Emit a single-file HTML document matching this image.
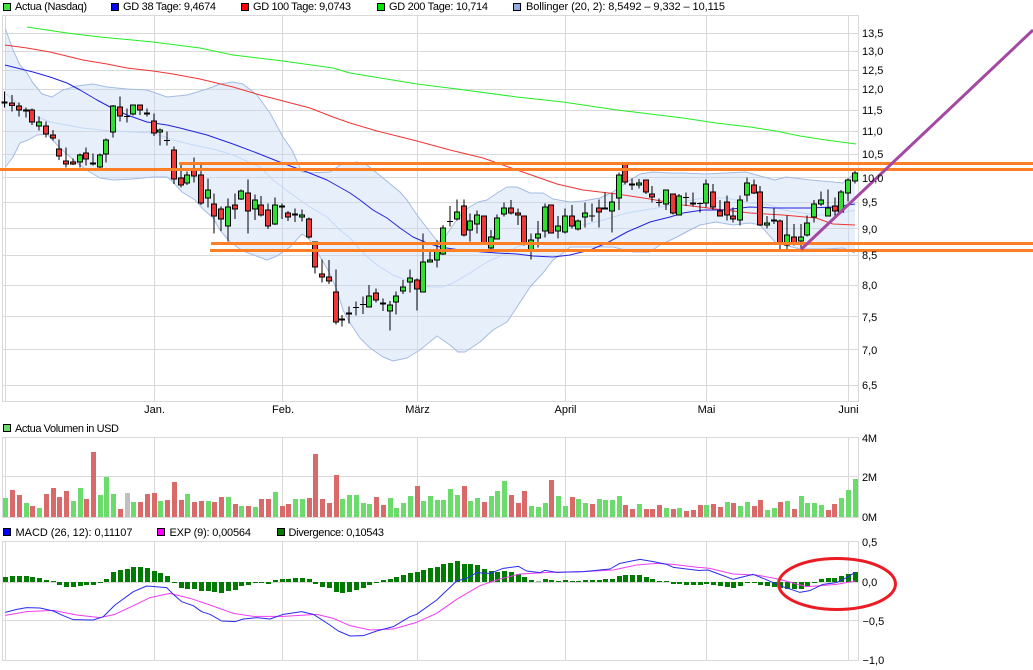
<!DOCTYPE html>
<html lang="de"><head><meta charset="utf-8"><title>Actua Chart</title>
<style>html,body{margin:0;padding:0;background:#fff}svg{display:block}text{font-family:"Liberation Sans",Arial,sans-serif;font-size:11px;fill:#000}</style>
</head><body>
<svg width="1033" height="670" viewBox="0 0 1033 670" xmlns="http://www.w3.org/2000/svg">
<!-- grid -->
<g fill="none" stroke="#d9d9d9" stroke-width="1" shape-rendering="crispEdges">
<path d="M2.5 15.5H858.5V401.5H2.5ZM5.5 15.5V401.5M154.5 15.5V401.5M282.5 15.5V401.5M417.5 15.5V401.5M565.5 15.5V401.5M706.5 15.5V401.5M848.5 15.5V401.5M3 33.5H858M3 51.5H858M3 70.5H858M3 89.5H858M3 110.5H858M3 131.5H858M3 154.5H858M3 177.5H858M3 202.5H858M3 228.5H858M3 255.5H858M3 285.5H858M3 316.5H858M3 349.5H858M3 385.5H858"/>
<path d="M2.5 437.5H858.5V517.5H2.5ZM5.5 437.5V517.5M154.5 437.5V517.5M282.5 437.5V517.5M417.5 437.5V517.5M565.5 437.5V517.5M706.5 437.5V517.5M848.5 437.5V517.5M3 476.5H858"/>
<path d="M2.5 541.5H858.5V660.5H2.5ZM5.5 541.5V660.5M154.5 541.5V660.5M282.5 541.5V660.5M417.5 541.5V660.5M565.5 541.5V660.5M706.5 541.5V660.5M848.5 541.5V660.5M3 582.5H858M3 620.5H858"/>
</g>
<!-- bollinger -->
<polygon fill="#c4d8f5" fill-opacity=".4" points="5.5,29 13,50 20,65 27,73 33,83 42,94 52,97 63,90 77,86 93,84 107,87 127,89 147,90 167,97 187,95 207,89 220,84 233,82 243,84 257,95 270,113 283,137 292,150 302,172 313,172.7 330,172 340,165 350,163 357,162 367,165 383,178 400,192 407,200 417,215 427,228 438,242 445,237 453,225 462,213 468,208 478,202 487,200 497,193 507,187 517,187 530,193 543,193 553,199 570,202 583,201 600,198 613,192 627,182 640,174 653,172 670,173 683,173 706,174 726,173 746,172 760,176 775,180 786,177 810,180 833,182 843,183 855,173 855,253 843,248 826,249 800,249 776,243 760,225 750,223 733,225 716,222 700,225 690,230 677,237 660,245 650,252 633,252 613,247 590,247 570,247 563,253 553,260 543,273 530,287 517,307 507,322 493,330 480,342 465,352 458,352 450,345 437,336 420,350 407,358 393,361 383,357 370,348 360,338 350,323 343,310 337,290 328,270 320,257 315,247 308,238 302,234 290,247 277,256 267,260 243,251 230,242 220,230 213,218 203,209 195,200 182,192 173,182 167,177 153,177 133,179 113,180 100,178 88,171 77,163 60,148 47,134 37,135 28,140 20,143 13,157 5.5,167"/>
<g fill="none" stroke-width="1" stroke-linejoin="round">
<polyline stroke="#c5d8f6" points="5,93 17,103 33,115 50,122 83,128 110,131 133,132 153,133 173,140 193,145 217,150 233,155 260,167 273,180 290,193 310,207 327,217 340,230 350,238 363,253 377,265 393,275 410,282 430,287 442,287 453,283 470,273 487,262 507,253 517,247 537,240 557,228 583,225 603,220 627,213 657,208 683,202 703,198 726,198 750,203 770,205 783,210 816,215 833,215 855,210"/>
<polyline stroke="#a5bbe3" points="5.5,29 13,50 20,65 27,73 33,83 42,94 52,97 63,90 77,86 93,84 107,87 127,89 147,90 167,97 187,95 207,89 220,84 233,82 243,84 257,95 270,113 283,137 292,150 302,172 313,172.7 330,172 340,165 350,163 357,162 367,165 383,178 400,192 407,200 417,215 427,228 438,242 445,237 453,225 462,213 468,208 478,202 487,200 497,193 507,187 517,187 530,193 543,193 553,199 570,202 583,201 600,198 613,192 627,182 640,174 653,172 670,173 683,173 706,174 726,173 746,172 760,176 775,180 786,177 810,180 833,182 843,183 855,173"/>
<polyline stroke="#a5bbe3" points="5.5,167 13,157 20,143 28,140 37,135 47,134 60,148 77,163 88,171 100,178 113,180 133,179 153,177 167,177 173,182 182,192 195,200 203,209 213,218 220,230 230,242 243,251 267,260 277,256 290,247 302,234 308,238 315,247 320,257 328,270 337,290 343,310 350,323 360,338 370,348 383,357 393,361 407,358 420,350 437,336 450,345 458,352 465,352 480,342 493,330 507,322 517,307 530,287 543,273 553,260 563,253 570,247 590,247 613,247 633,252 650,252 660,245 677,237 690,230 700,225 716,222 733,225 750,223 760,225 776,243 800,249 826,249 843,248 855,253"/>
<!-- moving averages -->
<polyline stroke="#22ee22" points="27,27 67,33 100,37 153,42 200,48 233,55 283,61 333,68 350,73 417,84 457,89 517,97 563,102 617,110 683,118 716,123 750,127 776,131 800,136 826,140 856,144"/>
<polyline stroke="#f03333" points="5,45 27,48 50,52 83,60 107,64 127,68 153,71 173,74 200,79 233,87 260,95 283,101 310,108 333,117 350,123 377,131 417,141 450,150 483,158 517,170 537,177 557,184 583,190 617,194 650,199 683,205 700,207 716,209 750,213 783,215 816,218 833,224 855,225"/>
<polyline stroke="#2222dd" points="5,65 17,68 33,72 50,77 67,83 80,90 97,100 110,107 127,115 147,122 167,125 180,128 207,135 233,144 257,153 277,161 293,167 307,172 327,180 350,193 360,200 373,210 387,218 400,228 413,237 427,243 440,247 460,250 483,252 497,253 517,254 533,256 553,257 570,255 590,250 607,243 627,232 650,222 670,217 683,213 703,210 723,210 750,207 773,208 810,208 833,207 855,204"/>
</g>
<!-- candles -->
<g fill="none" shape-rendering="crispEdges">
<g transform="scale(.33333)">
<path stroke="#000" stroke-width="3" d="M14 275V322M36 285V335M57 308V350M78 322V352M96 325V375M117 350V392M138 365V412M159 390V422M177 418V480M198 442V502M219 475V495M240 460V502M258 442V497M279 460V497M300 460V510M318 415V488M339 315V413M360 290V365M381 325V367M399 313V346M420 313V345M441 325V350M462 340V408M480 385V437M501 394V436M522 440V552M372 349H390M492 421H510"/>
<path stroke="#000" stroke-width="18" d="M14 304V311M36 307V318M57 316V331M78 328V335M96 328V367M117 364V379M138 376V403M159 403V415M177 445V469M198 481V493M219 484V493M240 463V487M258 457V478M279 487V493M300 463V503M318 418V463M339 316V397M360 319V349M399 313V343M420 313V331M441 337V343M462 361V400M480 388V397M522 448V538"/>
<path stroke="#30e030" stroke-width="12" d="M14 307V308M78 331V332M117 367V376M240 466V484M300 466V500M318 421V460M339 319V394M399 316V340M441 340V341M480 391V394"/>
<path stroke="#ee3838" stroke-width="12" d="M36 310V315M57 319V328M96 331V364M138 379V400M159 406V412M177 448V466M198 484V490M219 487V490M258 460V475M279 490V491M360 322V346M420 316V328M462 364V397M522 451V535"/>
</g>
<g transform="translate(0 150) scale(.33333)">
<path stroke="#000" stroke-width="3" d="M543 45V112M561 65V105M582 22V98M603 45V165M624 85V172M642 130V250M663 170V243M684 145V275M705 130V207M723 118V150M744 88V250M765 133V210M783 138V200M804 160V237M825 142V225M846 160V207M864 183V213M885 175V216M906 178V215M927 202V265M945 274V370M966 328V398M987 330V402M1008 358V523M1026 495V530M1047 470V520"/>
<path stroke="#000" stroke-width="18" d="M543 83V107M561 73V101M582 55V79M603 73V160M624 118V145M642 160V199M663 175V208M684 169V229M705 163V178M723 121V148M744 127V184M765 148V178M783 163V196M804 178V229M825 163V223M846 166V172M864 187V202M885 190V196M906 193V202M927 205V262M945 274V352M966 370V382M987 379V394M1008 424V517M1026 505V511M1047 487V493"/>
<path stroke="#30e030" stroke-width="12" d="M561 76V98M624 121V142M684 172V226M723 124V145M765 151V175M825 166V220M846 169V170M906 196V199"/>
<path stroke="#ee3838" stroke-width="12" d="M543 86V104M582 58V76M603 76V157M642 163V196M663 178V205M705 166V175M744 130V181M783 166V193M804 181V226M864 190V199M885 193V194M927 208V259M945 277V349M966 373V379M987 382V391M1008 427V514M1026 508V509M1047 490V491"/>
</g>
<g transform="translate(350 150) scale(.33333)">
<path stroke="#000" stroke-width="3" d="M18 455V497M39 440V492M57 405V472M78 415V457M99 445V483M120 453V542M138 425V494M159 390V432M180 358V428M201 385V482M219 250V427M240 305V337M261 270V353M279 225V315M300 168V230M321 148V212M342 148V260M360 190V275M381 181V250M402 196V281M423 240V300M441 193V268M462 157V200M483 150V193M504 175V225M522 196V287M543 250V328M564 213V293M585 160V262M603 163V250M624 198V266M645 175V250M666 165V235M684 208V242M705 157V232M726 160V215M747 148V233M765 127V178M786 130V248M807 68V180M825 40V103M846 85V120M867 87V115M888 88V132M906 108V158M927 145V170M948 118V180M969 130V193M987 132V197M1008 127V168M1029 127V170M9 473H27M30 464H48M291 215H309M717 198H735M918 158H936M999 143H1017"/>
<path stroke="#000" stroke-width="18" d="M57 436V472M78 427V451M99 457V463M120 463V484M138 436V457M159 409V424M180 382V397M201 388V418M219 334V427M240 328V337M261 302V331M279 232V313M321 184V208M342 166V257M360 211V241M381 193V223M402 196V281M423 259V295M441 202V268M462 172V193M483 172V190M504 187V196M522 196V280M543 268V300M564 250V265M585 169V244M603 163V250M624 226V244M645 196V247M666 196V229M684 211V238M705 187V202M747 172V187M765 172V178M786 154V184M807 73V145M825 40V97M846 100V106M867 97V106M888 88V127M906 130V142M948 118V163M969 130V190M987 136V196M1029 157V163"/>
<path stroke="#30e030" stroke-width="12" d="M57 439V469M120 466V481M138 439V454M159 412V421M180 385V394M219 337V424M240 331V334M261 305V328M279 235V310M321 187V205M360 214V238M381 196V220M423 262V292M441 205V265M462 175V190M543 271V297M564 253V262M585 172V241M624 229V241M645 199V244M684 214V235M705 190V199M765 175V176M786 157V181M807 76V142M846 103V104M867 100V103M948 121V160M987 139V193M1029 160V161"/>
<path stroke="#ee3838" stroke-width="12" d="M78 430V448M99 460V461M201 391V415M342 169V254M402 199V278M483 175V187M504 190V193M522 199V277M603 166V247M666 199V226M747 175V184M825 43V94M888 91V124M906 133V139M969 133V187"/>
</g>
<g transform="translate(683 150) scale(.33333)">
<path stroke="#000" stroke-width="3" d="M51 158V188M69 88V172M90 102V180M111 150V200M132 136V212M150 172V218M171 136V227M192 82V155M213 88V132M231 108V228M252 198V235M273 175V222M291 208V297M312 196V297M333 222V287M354 222V297M372 196V260M393 150V217M414 125V168M435 118V200M456 142V200M474 120V190M495 85V155M516 63V100M42 160H60"/>
<path stroke="#000" stroke-width="18" d="M69 100V160M90 124V172M111 181V199M132 154V196M150 196V208M171 148V211M192 97V136M213 103V130M231 124V226M252 217V226M273 208V214M291 211V285M312 253V286M333 259V280M354 259V275M372 217V256M393 160V202M414 148V163M435 172V199M456 166V184M474 124V187M495 88V130M516 67V94"/>
<path stroke="#30e030" stroke-width="12" d="M69 103V157M171 151V208M192 100V133M252 220V223M312 256V283M354 262V272M372 220V253M393 163V199M414 151V160M435 175V196M474 127V184M495 91V127M516 70V91"/>
<path stroke="#ee3838" stroke-width="12" d="M90 127V169M111 184V196M132 157V193M150 199V205M213 106V127M231 127V223M273 211V212M291 214V282M333 262V277M456 169V181"/>
</g>
</g>
<!-- volume -->
<g fill="none" stroke-width="15" shape-rendering="crispEdges">
<g transform="translate(0 400) scale(.33333)">
<path stroke="#6bdb6b" d="M16 351V294M79 351V309M118 351V324M220 351V303M241 351V264M301 351V285M319 351V231M340 351V282M400 351V306M481 351V303M562 351V282M625 351V303M685 351V291M724 351V318M766 351V321M826 351V276M886 351V297M907 351V297M1027 351V297M1048 351V285"/>
<path stroke="#da6a6a" d="M37 351V270M58 351V285M97 351V318M139 351V282M160 351V264M178 351V291M199 351V273M259 351V297M280 351V156M361 351V327M421 351V306M442 351V282M463 351V279M502 351V300M523 351V246M544 351V300M583 351V306M604 351V303M643 351V306M664 351V291M706 351V312M745 351V318M784 351V297M805 351V297M847 351V318M865 351V312M928 351V294M946 351V162M967 351V297M988 351V309M1009 351V225"/>
<path stroke="#c0c0c0" d="M382 351V279"/>
</g>
<g transform="translate(350 400) scale(.33333)">
<path stroke="#6bdb6b" d="M19 351V285M40 351V309M58 351V312M121 351V294M139 351V324M160 351V309M181 351V288M220 351V303M241 351V288M262 351V300M280 351V300M301 351V267M322 351V285M361 351V303M382 351V294M424 351V288M442 351V273M463 351V243M544 351V318M565 351V321M586 351V309M625 351V288M646 351V318M685 351V297M706 351V309M748 351V297M766 351V300M787 351V300M808 351V288M868 351V312M949 351V324M988 351V324"/>
<path stroke="#da6a6a" d="M79 351V291M100 351V315M202 351V258M343 351V258M403 351V306M484 351V285M505 351V309M523 351V273M604 351V240M667 351V291M727 351V312M826 351V315M847 351V327M889 351V327M907 351V327M928 351V315M970 351V327"/>
</g>
<g transform="translate(683 400) scale(.33333)">
<path stroke="#6bdb6b" d="M70 351V315M133 351V306M172 351V318M193 351V306M253 351V330M274 351V324M313 351V303M355 351V288M373 351V309M394 351V309M415 351V315M475 351V294M496 351V270M517 351V237"/>
<path stroke="#da6a6a" d="M10 351V333M31 351V330M52 351V315M91 351V312M112 351V321M151 351V309M214 351V318M232 351V300M292 351V306M334 351V327M436 351V330M454 351V312"/>
</g>
</g>
<!-- macd histogram -->
<g fill="none" stroke="#007a00" stroke-width="15" shape-rendering="crispEdges">
<path transform="translate(0 525) scale(.33333)" d="M16 171V156M37 171V153M58 171V153M79 171V153M97 171V156M118 171V159M139 171V165M160 171V168M178 171V180M199 171V186M220 171V186M241 171V183M259 171V180M280 171V180M301 171V174M319 171V162M340 171V141M361 171V135M382 171V132M400 171V126M421 171V126M442 171V129M463 171V138M481 171V144M502 171V153M523 171V174M544 171V189M562 171V192M583 171V192M604 171V198M625 171V198M643 171V201M664 171V204M685 171V198M706 171V195M724 171V183M745 171V180M766 171V174M784 171V174M805 171V177M826 171V165M847 171V162M865 171V162M886 171V159M907 171V159M928 171V162M946 171V177M967 171V186M988 171V189M1009 171V201M1027 171V204M1048 171V201"/>
<path transform="translate(350 525) scale(.33333)" d="M19 171V195M40 171V189M58 171V180M79 171V174M100 171V165M121 171V162M139 171V156M160 171V150M181 171V144M202 171V141M220 171V135M241 171V129M262 171V126M280 171V117M301 171V114M322 171V108M343 171V117M361 171V117M382 171V120M403 171V132M424 171V138M442 171V141M463 171V138M484 171V141M505 171V147M523 171V156M544 171V165M565 171V169M586 171V162M604 171V165M625 171V168M646 171V165M667 171V168M685 171V168M706 171V165M727 171V165M748 171V165M766 171V162M787 171V162M808 171V153M826 171V150M847 171V150M868 171V150M889 171V156M907 171V162M928 171V168M949 171V168M970 171V177M988 171V177"/>
<path transform="translate(683 525) scale(.33333)" d="M10 171V180M31 171V180M52 171V180M70 171V177M91 171V180M112 171V183M133 171V186M151 171V189M172 171V183M193 171V174M214 171V174M232 171V180M253 171V183M274 171V186M292 171V189M313 171V192M334 171V192M355 171V192M373 171V183M394 171V174M415 171V162M436 171V159M454 171V159M475 171V153M496 171V147M517 171V141"/>
</g>
<!-- macd lines -->
<g fill="none" stroke-width="3" stroke-linejoin="round">
<g stroke="#f23cf2">
<polyline transform="translate(0 525) scale(.33333)" points="16,271 80,260 160,256 230,270 300,278 345,268 400,242 450,218 510,205 570,220 630,240 700,265 760,274 850,274 950,268 1000,280 1050,302"/>
<polyline transform="translate(350 525) scale(.33333)" points="0,302 60,315 130,312 200,292 260,265 320,223 390,182 450,162 510,147 600,142 700,140 790,135 860,120 920,115 970,118 1050,128"/>
<polyline transform="translate(683 525) scale(.33333)" points="51,127 80,130 150,147 220,150 290,163 370,185 400,183 460,178 517,168"/>
</g>
<g stroke="#2a2aee">
<polyline transform="translate(0 525) scale(.33333)" points="16,262 50,253 80,248 120,249 160,258 190,272 220,284 280,285 310,275 345,240 400,200 440,183 500,188 520,208 545,230 580,242 605,260 630,268 665,288 705,290 730,282 770,278 810,282 850,268 905,260 940,268 985,297 1015,318 1050,333"/>
<polyline transform="translate(350 525) scale(.33333)" points="0,333 40,332 80,318 130,305 180,275 200,268 260,225 320,168 350,160 380,143 420,145 460,130 505,124 530,138 570,143 585,136 620,142 700,140 780,132 810,115 870,103 910,110 950,118 970,127 1010,132 1050,137"/>
<polyline transform="translate(683 525) scale(.33333)" points="51,136 75,135 150,163 210,148 240,160 300,185 350,202 380,197 420,178 460,173 490,158 517,142"/>
</g>
</g>
<!-- annotations -->
<g fill="none" stroke="#ff7f27" stroke-width="3" shape-rendering="crispEdges">
<path d="M179 163.5H1033M0 169.5H1033M211 243.5H1033M210 250.5H1033"/>
</g>
<line x1="801" y1="249.5" x2="1033" y2="30" stroke="#a349a4" stroke-width="3"/>
<ellipse cx="837" cy="584" rx="58.5" ry="25.5" fill="none" stroke="#ed1c24" stroke-width="3"/>
<!-- legends -->
<g stroke="#000" stroke-width="1" shape-rendering="crispEdges">
<rect x="3.5" y="3.5" width="7" height="7" fill="#3ce63c"/>
<rect x="111.5" y="3.5" width="7" height="7" fill="#0000ff"/>
<rect x="241.5" y="3.5" width="7" height="7" fill="#ff0000"/>
<rect x="377.5" y="3.5" width="7" height="7" fill="#00e600"/>
<rect x="513.5" y="3.5" width="7" height="7" fill="#92aadf"/>
<rect x="3.5" y="424.5" width="7" height="7" fill="#6bdb6b"/>
<rect x="3.5" y="528.5" width="7" height="7" fill="#0000ff"/>
<rect x="157.5" y="528.5" width="7" height="7" fill="#ff00ff"/>
<rect x="277.5" y="528.5" width="7" height="7" fill="#007a00"/>
</g>
<text x="15" y="10" textLength="72" lengthAdjust="spacing">Actua (Nasdaq)</text>
<text x="123" y="10" textLength="93" lengthAdjust="spacing">GD 38 Tage: 9,4674</text>
<text x="253" y="10" textLength="98" lengthAdjust="spacing">GD 100 Tage: 9,0743</text>
<text x="389" y="10" textLength="99" lengthAdjust="spacing">GD 200 Tage: 10,714</text>
<text x="526" y="10" textLength="199" lengthAdjust="spacing">Bollinger (20, 2): 8,5492 – 9,332 – 10,115</text>
<text x="15" y="432" textLength="104" lengthAdjust="spacing">Actua Volumen in USD</text>
<text x="15.5" y="536" textLength="117" lengthAdjust="spacing">MACD (26, 12): 0,11107</text>
<text x="169.5" y="536" textLength="81.5" lengthAdjust="spacing">EXP (9): 0,00564</text>
<text x="288.5" y="536" textLength="95.5" lengthAdjust="spacing">Divergence: 0,10543</text>
<!-- y axis -->
<g>
<text x="862" y="37">13,5</text><text x="862" y="55">13,0</text><text x="862" y="74">12,5</text><text x="862" y="93">12,0</text><text x="862" y="114">11,5</text><text x="862" y="135">11,0</text><text x="862" y="158">10,5</text><text x="862" y="182">10,0</text><text x="862" y="206">9,5</text><text x="862" y="233">9,0</text><text x="862" y="259">8,5</text><text x="862" y="289">8,0</text><text x="862" y="321">7,5</text><text x="862" y="354">7,0</text><text x="862" y="389">6,5</text>
<text x="862" y="442" textLength="15" lengthAdjust="spacing">4 M</text><text x="862" y="481" textLength="15" lengthAdjust="spacing">2 M</text><text x="862" y="521" textLength="15" lengthAdjust="spacing">0 M</text>
<text x="862" y="546">0,5</text><text x="862" y="586">0,0</text><text x="862.5" y="625">−0,5</text><text x="862.5" y="664">−1,0</text>
</g>
<!-- months -->
<g text-anchor="middle">
<text x="154.5" y="413">Jan.</text><text x="283" y="413">Feb.</text><text x="417.5" y="413">März</text><text x="565.5" y="413">April</text><text x="706.5" y="413">Mai</text><text x="848.5" y="413">Juni</text>
</g>
</svg>
</body></html>
